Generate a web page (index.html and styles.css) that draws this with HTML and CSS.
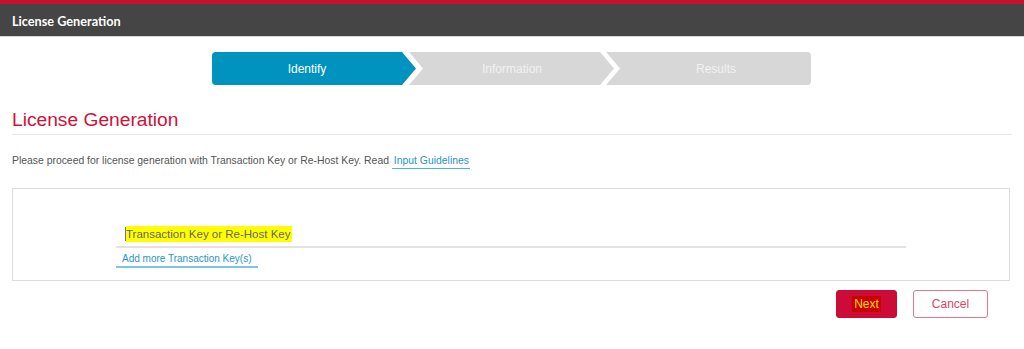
FILE: index.html
```html
<!DOCTYPE html>
<html>
<head>
<meta charset="utf-8">
<link rel="stylesheet" href="styles.css">
</head>
<body>
<header class="topbar">
  <div class="topbar-title">License Generation</div>
</header>
<nav class="stepper">
  <div class="step step-first step-active"><span>Identify</span></div>
  <div class="step step-mid"><span>Information</span></div>
  <div class="step step-last"><span>Results</span></div>
</nav>
<main class="content">
  <h1 class="page-title">License Generation</h1>
  <p class="intro">Please proceed for license generation with Transaction Key or Re-Host Key. Read <a class="link" href="#">Input Guidelines</a></p>
  <section class="panel">
    <div class="field">
      <div class="input"><span class="caret"></span><span class="placeholder">Transaction Key or Re-Host Key</span></div>
      <a class="add-link" href="#">Add more Transaction Key(s)</a>
    </div>
  </section>
  <div class="actions">
    <button class="btn btn-primary"><span class="hl">Next</span></button>
    <button class="btn btn-secondary">Cancel</button>
  </div>
</main>
</body>
</html>
```
FILE: styles.css
```css
* { box-sizing: border-box; }
html, body { margin: 0; padding: 0; background: #fff; }
body { font-family: "Liberation Sans", Arial, sans-serif; color: #555; }

.topbar {
  border-top: 4px solid #c8102e;
  background: #454545;
  height: 37px;
  border-bottom: 1px solid #d8d8d8;
  display: flex;
  align-items: center;
  padding-left: 12px;
}
.topbar-title {
  font-family: Lato, "Liberation Sans", sans-serif;
  font-weight: 700;
  font-size: 12.7px;
  color: #fff;
  margin-top: 1px;
}

.stepper {
  display: flex;
  justify-content: center;
  margin-top: 15px;
  padding-right: 1px;
}
.step {
  width: 205px;
  height: 33px;
  background: #d6d7d6;
  color: #f2f2f2;
  font-size: 12px;
  display: flex;
  align-items: center;
}
.step span { display: block; width: 190px; text-align: center; }
.step + .step { margin-left: -8px; }
.step-first {
  border-radius: 4px 0 0 4px;
  clip-path: polygon(0 0, 190px 0, 204px 50%, 190px 100%, 0 100%);
}
.step-mid {
  clip-path: polygon(0 0, 191px 0, 205px 50%, 191px 100%, 0 100%, 14px 50%);
}
.step-mid span { margin-left: 8px; }
.step-last {
  border-radius: 0 4px 4px 0;
  clip-path: polygon(0 0, 100% 0, 100% 100%, 0 100%, 14px 50%);
}
.step-last span { margin-left: 15px; }
.step-active { background: #0093c0; color: #fff; }

.content { padding: 0 12px; }
.page-title {
  margin: 24px 0 0;
  font-weight: 400;
  font-size: 19.2px;
  line-height: 22px;
  color: #d0103a;
  padding-bottom: 3px;
  border-bottom: 1px solid #e6e6e6;
}
.intro {
  margin: 19px 0 0;
  font-size: 10.4px;
  line-height: 14px;
  color: #555;
}
.link {
  color: #2a95c5;
  text-decoration: none;
  border-bottom: 1px solid #4fb3d6;
  padding: 0 1px 2px 2px;
}

.panel {
  margin-top: 20px;
  width: 998px;
  height: 93px;
  border: 1px solid #dcdcdc;
  padding: 34px 0 0 103px;
}
.field { width: 790px; }
.input {
  height: 25px;
  border-bottom: 2px solid #e2e2e2;
  display: flex;
  align-items: center;
  padding-left: 9px;
  padding-bottom: 2px;
}
.caret { width: 1px; height: 14px; background: #777; }
.placeholder {
  background: #ffff00;
  color: #666;
  font-size: 11.5px;
  line-height: 16px;
  padding: 0 2px 0 0;
}
.add-link {
  display: inline-block;
  margin-top: 2px;
  font-size: 10px;
  color: #2a95c5;
  text-decoration: none;
  border-bottom: 2px solid #7cc6e0;
  padding: 0 6px 1px 6px;
  line-height: 13px;
}

.actions {
  display: flex;
  justify-content: flex-end;
  gap: 16px;
  margin-top: 9px;
  padding-right: 24px;
}
.btn {
  height: 28px;
  font-family: "Liberation Sans", Arial, sans-serif;
  font-size: 12px;
  border-radius: 3px;
  cursor: pointer;
}
.btn-primary {
  width: 61px;
  background: #cc0c36;
  border: 1px solid #cc0c36;
  color: #ffd800;
}
.hl { background: #c80000; padding: 1px 2px; }
.btn-secondary {
  width: 75px;
  background: #fff;
  border: 1px solid #e07590;
  color: #d6476a;
}
```
